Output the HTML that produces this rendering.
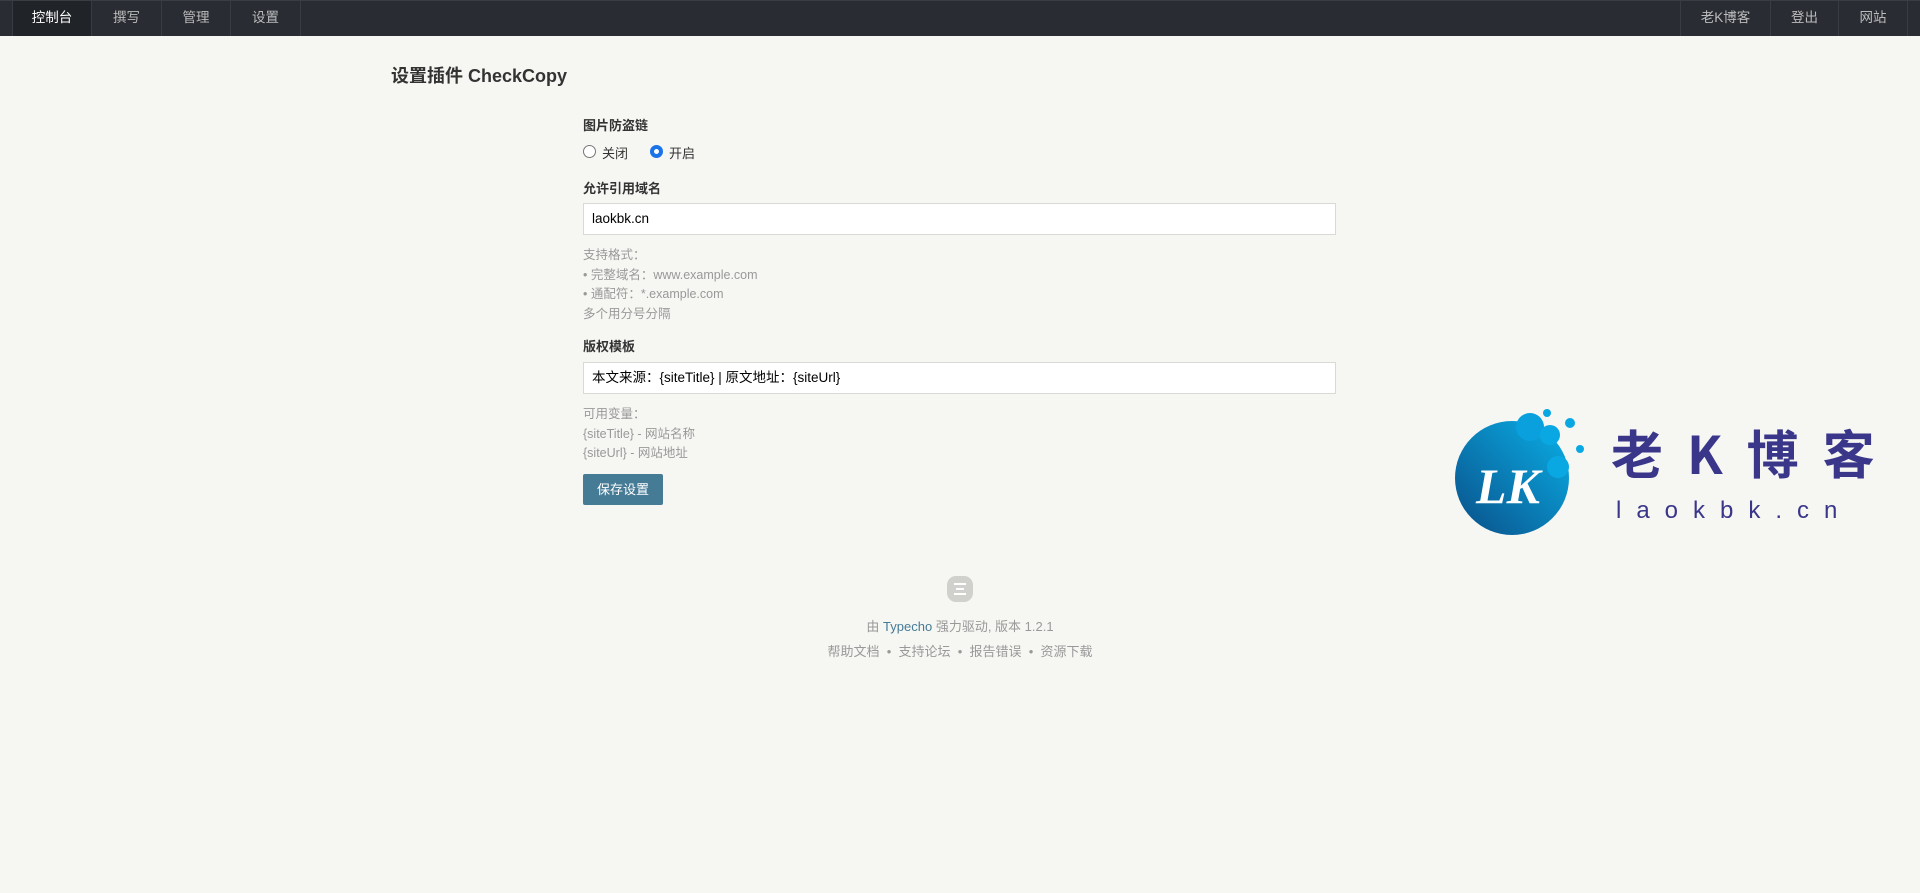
<!DOCTYPE html>
<html><head><meta charset="utf-8"><style>
*{box-sizing:border-box;margin:0;padding:0}
body{width:1920px;height:893px;background:#f6f6f3;font-family:"Liberation Sans","Noto Sans CJK SC",sans-serif;font-size:14px;color:#444;position:relative;overflow:hidden}
.nav{position:absolute;left:0;top:0;width:1920px;height:36px;background:#292d33;border-top:1px solid #3a3d44}
.nav a{position:absolute;top:0;height:35px;line-height:34px;color:#bbb;text-align:center;border-right:1px solid #383d45;font-size:13.5px}
.nav a.act{background:#202328;color:#fff}
.abs{position:absolute}
h2{position:absolute;left:391px;top:62px;font-size:18px;font-weight:bold;color:#333}
.lbl{position:absolute;left:583px;font-weight:bold;font-size:13px;color:#333}
.inp{position:absolute;left:583px;width:753px;height:32px;background:#fff;border:1px solid #d9d9d6;padding-left:8px;line-height:30px;font-size:13.5px;color:#000}
.d{position:absolute;left:583px;font-size:12.5px;color:#999}
.btn{position:absolute;left:583px;top:474px;width:80px;height:31px;background:#467b96;color:#fff;border-radius:2px;line-height:31px;text-align:center;font-size:13px}
.radio{position:absolute;top:145px;width:13px;height:13px;border:1px solid #777;border-radius:50%;background:#fff}
.ft{position:absolute;left:0;width:1920px;text-align:center;color:#999;font-size:13px}
</style></head><body>
<div class="nav">
<a class="act" style="left:12px;width:80px;border-left:1px solid #383d45">控制台</a>
<a style="left:92px;width:70px">撰写</a>
<a style="left:162px;width:69px">管理</a>
<a style="left:231px;width:70px">设置</a>
<a style="left:1680px;width:91px;border-left:1px solid #383d45">老K博客</a>
<a style="left:1771px;width:68px">登出</a>
<a style="left:1839px;width:69px">网站</a>
</div>
<h2>设置插件 CheckCopy</h2>
<div class="lbl" style="top:115px">图片防盗链</div>
<div class="radio" style="left:583px"></div>
<div class="abs" style="left:602px;top:143px;font-size:13px;color:#333">关闭</div>
<div class="radio" style="left:650px;border:4px solid #1a73e8"></div>
<div class="abs" style="left:669px;top:143px;font-size:13px;color:#333">开启</div>
<div class="lbl" style="top:178px">允许引用域名</div>
<div class="inp" style="top:203px">laokbk.cn</div>
<div class="d" style="top:244px">支持格式：</div>
<div class="d" style="top:264px">• 完整域名：www.example.com</div>
<div class="d" style="top:283px">• 通配符：*.example.com</div>
<div class="d" style="top:303px">多个用分号分隔</div>
<div class="lbl" style="top:336px">版权模板</div>
<div class="inp" style="top:362px">本文来源：{siteTitle} | 原文地址：{siteUrl}</div>
<div class="d" style="top:403px">可用变量：</div>
<div class="d" style="top:423px">{siteTitle} - 网站名称</div>
<div class="d" style="top:442px">{siteUrl} - 网站地址</div>
<div class="btn">保存设置</div>
<div class="abs" style="left:947px;top:576px;width:26px;height:26px;border-radius:9px;background:#d0d0cd">
<div class="abs" style="left:7px;top:7px;width:12px;height:2px;background:#fff"></div>
<div class="abs" style="left:9px;top:12px;width:8px;height:2px;background:#fff"></div>
<div class="abs" style="left:7px;top:17px;width:12px;height:2px;background:#fff"></div>
</div>
<div class="ft" style="top:616px">由 <span style="color:#467b96">Typecho</span> 强力驱动, 版本 1.2.1</div>
<div class="ft" style="top:641px">帮助文档 &nbsp;•&nbsp; 支持论坛 &nbsp;•&nbsp; 报告错误 &nbsp;•&nbsp; 资源下载</div>
<svg class="abs" style="left:1450px;top:405px" width="150" height="135" viewBox="0 0 150 135">
<defs><linearGradient id="g" x1="0" y1="1" x2="1" y2="0"><stop offset="0" stop-color="#0a4f88"/><stop offset="1" stop-color="#0ab0e8"/></linearGradient></defs>
<circle cx="62" cy="73" r="57" fill="url(#g)"/>
<circle cx="80" cy="22" r="14" fill="#0aa0dd"/>
<circle cx="100" cy="30" r="10" fill="#0aa8e2"/>
<circle cx="108" cy="62" r="11" fill="#0aa8e2"/>
<circle cx="120" cy="18" r="5" fill="#0aa8e2"/>
<circle cx="130" cy="44" r="4" fill="#0aa8e2"/>
<circle cx="97" cy="8" r="4" fill="#0aa8e2"/>
<text x="58" y="98" text-anchor="middle" font-family="Liberation Serif,serif" font-style="italic" font-weight="bold" font-size="50" fill="#fff">LK</text>
</svg>
<div class="abs" style="left:1611px;top:420px;font-size:52px;font-weight:bold;color:#3a3689;letter-spacing:24px;font-family:'Noto Sans CJK SC',sans-serif;line-height:64px;white-space:nowrap">老K博客</div>
<div class="abs" style="left:1616px;top:497px;font-size:24px;color:#3a3689;letter-spacing:15px">laokbk.cn</div>
</body></html>
